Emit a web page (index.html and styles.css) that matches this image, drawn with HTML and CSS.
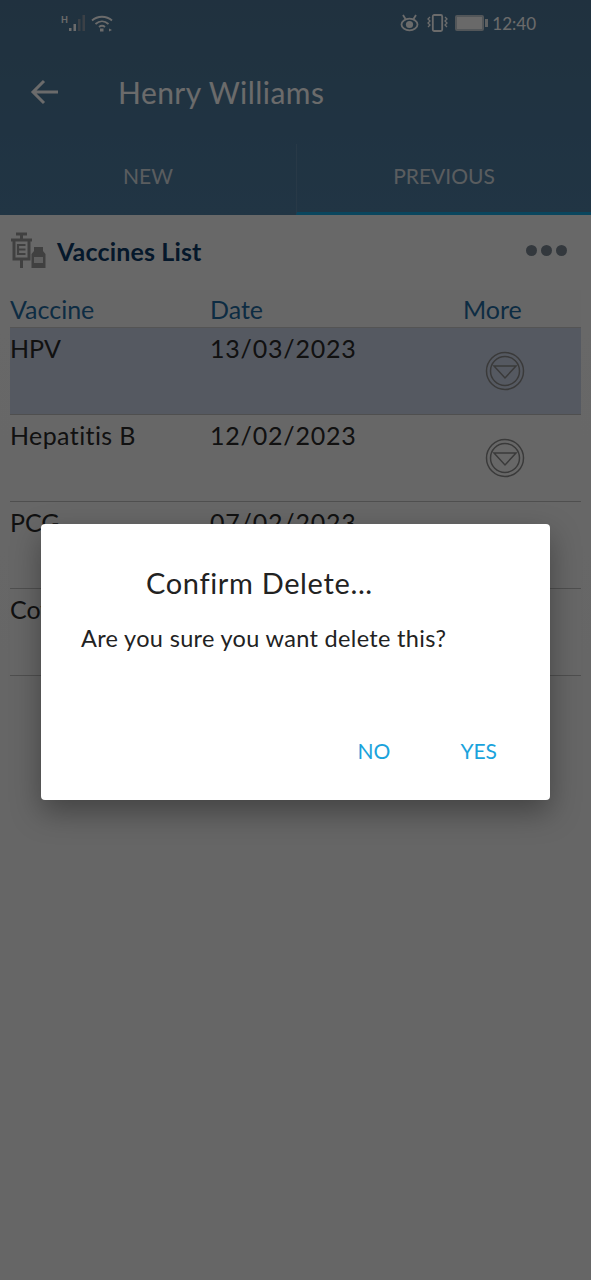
FILE: index.html
```html
<!DOCTYPE html>
<html lang="en">
<head>
    <meta charset="UTF-8">
    <title>Vaccines List</title>
    <link rel="stylesheet" href="styles.css">
</head>
<body>
    <main id="screen">
        <header id="top">
            <div class="status">
                <div class="status-left">
                    <span class="net">H</span>
                    <svg width="18" height="18" viewBox="0 0 18 18" class="bars">
                        <rect x="0" y="14" width="2.500" height="3" fill="#fff"/>
                        <rect x="4.500" y="10" width="2.500" height="7" fill="#fff"/>
                        <rect x="9" y="5" width="2.500" height="12" fill="#8c9aa6"/>
                        <rect x="13.500" y="1" width="2.500" height="16" fill="#8c9aa6"/>
                    </svg>
                    <svg width="22" height="18" viewBox="0 0 22 18" class="wifi">
                        <path d="M1 6.500C6.500 1.500 15.500 1.500 21 6.500" fill="none" stroke="#fff" stroke-width="1.800"/>
                        <path d="M4.500 10C8.500 6.500 13.500 6.500 17.500 10" fill="none" stroke="#fff" stroke-width="1.800"/>
                        <path d="M8 13C9.800 11.500 12.200 11.500 14 13" fill="none" stroke="#fff" stroke-width="1.800"/>
                        <rect x="9" y="14.500" width="3.500" height="3" fill="#fff"/>
                        <path d="M18 14.500l3 1.500-3 1.500z" fill="#fff"/>
                    </svg>
                </div>
                <div class="status-right">
                    <svg width="19" height="18" viewBox="0 0 19 18" class="eye">
                        <ellipse cx="9.500" cy="10.500" rx="8" ry="5.800" fill="none" stroke="#fff" stroke-width="1.800"/>
                        <circle cx="9.500" cy="10.500" r="3.600" fill="#fff"/>
                        <path d="M3 1l2.500 4M16 1l-2.500 4" stroke="#fff" stroke-width="1.800"/>
                    </svg>
                    <svg width="21" height="18" viewBox="0 0 21 18" class="vibrate">
                        <rect x="5.800" y="1" width="9.400" height="16" rx="1.500" fill="none" stroke="#fff" stroke-width="1.800"/>
                        <path d="M3 3L1 5l2 2-2 2 2 2-2 2M18 3l2 2-2 2 2 2-2 2 2 2" fill="none" stroke="#fff" stroke-width="1.300"/>
                    </svg>
                    <div class="battery"><i></i><b></b></div>
                    <span class="clock">12:40</span>
                </div>
            </div>
            <div class="appbar">
                <svg width="30" height="26" viewBox="0 0 30 26" class="back">
                    <path d="M28 13H3M14 2L3 13l11 11" fill="none" stroke="#fff" stroke-width="3"/>
                </svg>
                <h1>Henry Williams</h1>
            </div>
            <nav class="tabs">
                <div class="tab">NEW</div>
                <div class="tab active">PREVIOUS</div>
            </nav>
        </header>

        <section class="list-head">
            <svg width="38" height="38" viewBox="0 0 38 38" class="vaccine-icon">
                <path d="M7 2h11M12.500 2v6M2 8h21M5 8v19h15V8M12.500 27v9" fill="none" stroke="#9a9a9a" stroke-width="3"/>
                <path d="M8.500 13h8M8.500 17.500h8M8.500 22h8M9 12v11" fill="none" stroke="#9a9a9a" stroke-width="2.200"/>
                <path d="M25 15h9v4l2.500 3v14h-14V22l2.500-3z" fill="#9a9a9a"/>
                <rect x="25" y="25" width="9" height="6" fill="#e4e4e4"/>
            </svg>
            <h2>Vaccines List</h2>
            <div class="dots"><i></i><i></i><i></i></div>
        </section>

        <section class="table">
            <div class="row head">
                <div>Vaccine</div>
                <div>Date</div>
                <div>More</div>
            </div>
            <div class="row selected">
                <div>HPV</div>
                <div class="date">13/03/2023</div>
                <div class="more">
                    <svg width="40" height="40" viewBox="0 0 40 40">
                        <circle cx="20" cy="20" r="18.500" fill="none" stroke="#8a8a8a" stroke-width="1.500"/>
                        <circle cx="20" cy="20" r="14.500" fill="none" stroke="#8a8a8a" stroke-width="1.500"/>
                        <path d="M9 15h22L20 27z" fill="none" stroke="#8a8a8a" stroke-width="1.500"/>
                    </svg>
                </div>
            </div>
            <div class="row">
                <div class="name">Hepatitis B</div>
                <div class="date">12/02/2023</div>
                <div class="more">
                    <svg width="40" height="40" viewBox="0 0 40 40">
                        <circle cx="20" cy="20" r="18.500" fill="none" stroke="#8a8a8a" stroke-width="1.500"/>
                        <circle cx="20" cy="20" r="14.500" fill="none" stroke="#8a8a8a" stroke-width="1.500"/>
                        <path d="M9 15h22L20 27z" fill="none" stroke="#8a8a8a" stroke-width="1.500"/>
                    </svg>
                </div>
            </div>
            <div class="row">
                <div>PCG</div>
                <div class="date">07/02/2023</div>
                <div></div>
            </div>
            <div class="row">
                <div>Covid</div>
                <div></div>
                <div></div>
            </div>
        </section>
    </main>

    <div id="overlay">
        <div id="dialog">
            <h3>Confirm Delete...</h3>
            <p>Are you sure you want delete this?</p>
            <div class="actions">
                <button>NO</button>
                <button>YES</button>
            </div>
        </div>
    </div>
</body>
</html>
```

FILE: styles.css
```css
* {
    box-sizing: border-box;
}
html, body {
    margin: 0;
    padding: 0;
}
body {
    width: 591px;
    height: 1280px;
    overflow: hidden;
    position: relative;
    font-family: "Lato", "Noto Sans", sans-serif;
    background-color: #f3f3f3;
}
#screen {
    height: 100%;
    background: linear-gradient(#fafafa, #f3f3f3 60%);
}
#top {
    height: 215px;
    background: linear-gradient(#4c7696, #4f7ea3);
    color: #fff;
}
.status {
    height: 44px;
    padding: 11px 55px 0 61px;
    display: flex;
    justify-content: space-between;
}
.status-left, .status-right {
    display: flex;
    align-items: center;
    height: 24px;
}
.net {
    font-size: 9px;
    font-weight: 700;
    align-self: flex-start;
    margin-top: 3px;
    width: 8px;
}
.bars {
    margin-right: 4px;
}
.eye {
    margin-right: 8px;
}
.vibrate {
    margin-right: 7px;
}
.battery {
    display: flex;
    align-items: center;
    margin-right: 4px;
}
.battery i {
    display: block;
    width: 29px;
    height: 16px;
    border: 2px solid #c4ccd3;
    border-radius: 2px;
    background-color: #fafafa;
}
.battery b {
    display: block;
    width: 3px;
    height: 8px;
    margin-left: 1px;
    background-color: #e2e6ea;
}
.clock {
    font-size: 17px;
}
.appbar {
    height: 100px;
    padding: 0 0 0 30px;
    display: flex;
    align-items: center;
    color: #fff;
}
.appbar h1 {
    margin: 0 0 4px 58px;
    font-size: 30px;
    letter-spacing: 0.45px;
    font-weight: 400;
}
.back {
    margin-bottom: 5px;
}
.tabs {
    display: grid;
    grid-template-columns: 296px 295px;
    height: 71px;
}
.tab {
    display: flex;
    align-items: center;
    justify-content: center;
    font-size: 21px;
    padding-bottom: 9px;
    color: #d7dde2;
}
.tab.active {
    border-left: 1px solid #5f89a9;
    border-bottom: 3px solid #1aa8e0;
    padding-bottom: 6px;
}
.list-head {
    height: 75px;
    padding: 0 24px 4px 9px;
    display: flex;
    align-items: center;
    background-color: #f8f8f8;
}
.list-head h2 {
    margin: 0 0 0 10px;
    font-size: 25px;
    letter-spacing: 0.15px;
    font-weight: 700;
    color: #0d3a66;
}
.dots {
    margin-left: auto;
    display: flex;
    gap: 4px;
}
.dots i {
    width: 11px;
    height: 11px;
    border-radius: 50%;
    background-color: #7a8692;
}
.table {
    margin: 0 10px;
    background-color: #f6f6f6;
}
.row {
    display: grid;
    grid-template-columns: 200px 253px 118px;
    height: 87px;
    border-bottom: 1.500px solid #bcbcbc;
    font-size: 25px;
    color: #2a2a2a;
    padding-top: 5px;
}
.row.head {
    height: 38px;
    padding-top: 4px;
    border-bottom-color: #c8c8c8;
    color: #1f6aa0;
}
.row.selected {
    background-color: #cbd4e6;
}
.date {
    letter-spacing: 0.8px;
}
.name {
    letter-spacing: 0.4px;
}
.more {
    display: flex;
    justify-content: flex-start;
    padding: 18px 0 0 22px;
}
#overlay {
    position: absolute;
    inset: 0;
    background-color: rgba(0, 0, 0, 0.58);
}
#dialog {
    position: absolute;
    left: 41px;
    top: 524px;
    width: 509px;
    height: 276px;
    background-color: #fff;
    border-radius: 4px;
    box-shadow: 0 12px 30px rgba(0, 0, 0, 0.35);
    padding: 40px 53px 0 40px;
    display: flex;
    flex-direction: column;
    color: #222;
}
#dialog h3 {
    margin: 0 0 0 65px;
    font-size: 29px;
    letter-spacing: 0.65px;
    line-height: 38px;
    font-weight: 400;
}
#dialog p {
    margin: 21px 0 0;
    font-size: 23.500px;
    letter-spacing: 0.33px;
    line-height: 30px;
}
.actions {
    margin-top: auto;
    margin-bottom: 35px;
    display: flex;
    justify-content: flex-end;
    gap: 70px;
}
.actions button {
    border: none;
    background: none;
    padding: 0;
    font-family: inherit;
    font-size: 21px;
    line-height: 28px;
    color: #1aa3dc;
}
```
